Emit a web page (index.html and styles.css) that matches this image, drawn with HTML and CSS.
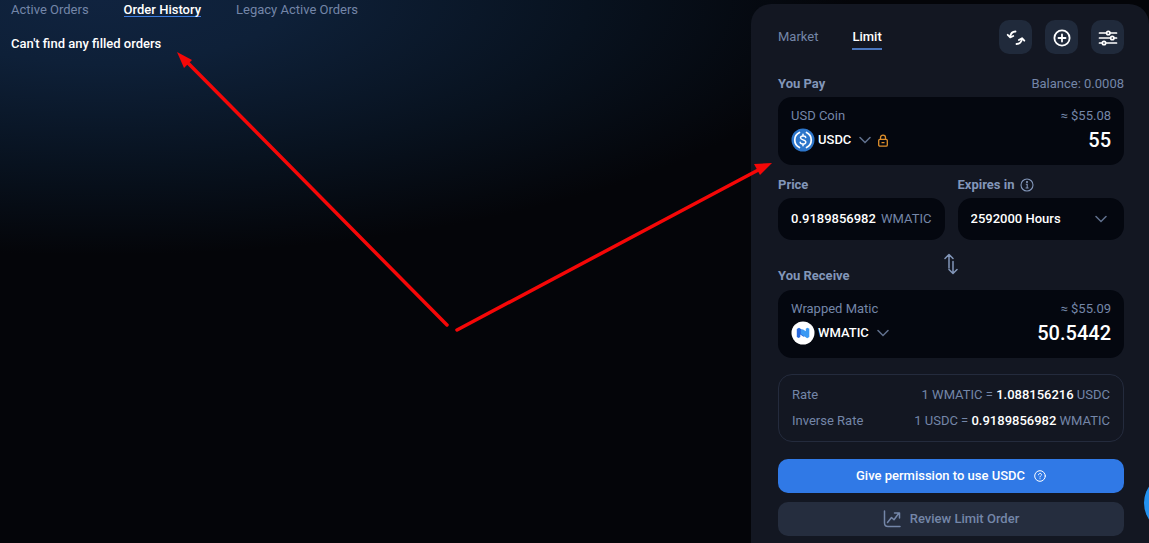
FILE: index.html
```html
<!DOCTYPE html>
<html lang="en">
<head>
    <meta charset="UTF-8">
    <meta name="viewport" content="width=device-width, initial-scale=1.0">
    <title>Limit Order</title>
    <link rel="stylesheet" href="styles.css">
</head>
<body>
    <div class="page">
        <main class="orders">
            <nav class="order-tabs">
                <a href="#active">Active Orders</a>
                <a href="#history" class="active">Order History</a>
                <a href="#legacy">Legacy Active Orders</a>
            </nav>
            <p class="empty">Can't find any filled orders</p>
        </main>

        <form class="panel">
            <div class="panel-header">
                <nav class="mode-tabs">
                    <a href="#market">Market</a>
                    <a href="#limit" class="active">Limit</a>
                </nav>
                <div class="tools">
                    <button type="button" class="tool" aria-label="Refresh">
                        <svg width="20" height="20" viewBox="0 0 20 20" fill="none" stroke="currentColor" stroke-width="1.8" stroke-linecap="round" stroke-linejoin="round">
                            <path d="M9.500 4.500C6.500 4.500 4.600 6.300 4.200 9.800M1.700 7.800L4.200 10.300L7.300 9M10.500 17C13.500 17 15.600 15.200 16 11.700M12.900 13L16 11.200L18.300 13.700"/>
                        </svg>
                    </button>
                    <button type="button" class="tool" aria-label="Add token">
                        <svg width="20" height="20" viewBox="0 0 20 20" fill="none" stroke="currentColor" stroke-width="1.8" stroke-linecap="round">
                            <circle cx="10" cy="11" r="7.600"/>
                            <path d="M10 7.500V14.500M6.500 11H13.500"/>
                        </svg>
                    </button>
                    <button type="button" class="tool" aria-label="Settings">
                        <svg width="20" height="20" viewBox="0 0 20 20" fill="none" stroke="currentColor" stroke-width="1.7" stroke-linecap="round">
                            <path d="M1.500 6H8.300M12.300 6H18.500M1.500 11H12.300M16.300 11H18.500M1.500 16H4M8 16H18.500"/>
                            <circle cx="10.300" cy="6" r="1.700"/>
                            <circle cx="14.300" cy="11" r="1.700"/>
                            <circle cx="6" cy="16" r="1.700"/>
                        </svg>
                    </button>
                </div>
            </div>

            <div class="label-row">
                <label class="label" for="pay">You Pay</label>
                <span>Balance: 0.0008</span>
            </div>
            <div class="token-box">
                <div class="token-row">
                    <span>USD Coin</span>
                    <span>≈ $55.08</span>
                </div>
                <div class="token-row">
                    <button type="button" class="token">
                        <svg width="24" height="24" viewBox="0 0 24 24" fill="none" stroke="#fff" stroke-linecap="round">
                            <circle cx="12" cy="12" r="11.500" fill="#2d76cb" stroke="none"/>
                            <path d="M8.500 4.500A8.300 8.300 0 0 0 8.500 19.500M15.500 4.500A8.300 8.300 0 0 1 15.500 19.500" stroke-width="1.700"/>
                            <path d="M14.700 9.500C14.500 7.500 9.500 7.400 9.500 9.800C9.500 12.400 14.800 11.300 14.800 14.100C14.800 16.700 9.300 16.500 9.200 14.200M12 6.300V8M12 16V17.700" stroke-width="1.500"/>
                        </svg>
                        USDC
                        <svg class="chevron" width="12" height="8" viewBox="0 0 12 8"><path d="M1 1.500L6 6.500L11 1.500"/></svg>
                    </button>
                    <svg class="lock" width="10" height="13" viewBox="0 0 10 13" fill="none" stroke="currentColor" stroke-width="1.300">
                        <rect x="0.700" y="5.300" width="8.600" height="6.800" rx="1.200"/>
                        <path d="M2.500 5.300V3.500C2.500 0.200 7.500 0.200 7.500 3.500V5.300M3.500 8.700H6.500"/>
                    </svg>
                    <input id="pay" class="amount" type="text" value="55">
                </div>
            </div>

            <div class="fields">
                <div class="field">
                    <label class="label" for="price">Price</label>
                    <div class="field-box">
                        <input id="price" type="text" value="0.9189856982">
                        <span>WMATIC</span>
                    </div>
                </div>
                <div class="field">
                    <label class="label" for="expires">Expires in
                        <svg width="14" height="14" viewBox="0 0 14 14" fill="none" stroke="currentColor" stroke-width="1.100">
                            <circle cx="7" cy="7" r="6"/>
                            <path d="M5.800 6.200H7.200V10M5.600 10H8.600"/>
                            <circle cx="7" cy="4" r="0.500" fill="currentColor"/>
                        </svg>
                    </label>
                    <div class="field-box select-box">
                        <select id="expires">
                            <option>2592000 Hours</option>
                        </select>
                        <svg class="chevron" width="12" height="8" viewBox="0 0 12 8"><path d="M1 1.500L6 6.500L11 1.500"/></svg>
                    </div>
                </div>
            </div>

            <div class="switch-row">
                <label class="label" for="receive">You Receive</label>
                <button type="button" class="switch" aria-label="Switch tokens">
                    <svg width="14" height="22" viewBox="0 0 14 22" fill="none" stroke="currentColor" stroke-width="1.500" stroke-linecap="round" stroke-linejoin="round">
                        <path d="M5 15V2M1 5.500L5 1.500L9 5.500M9 8.500V20M5 16.500L9 20.500L13 16.500"/>
                    </svg>
                </button>
            </div>
            <div class="token-box">
                <div class="token-row">
                    <span>Wrapped Matic</span>
                    <span>≈ $55.09</span>
                </div>
                <div class="token-row">
                    <button type="button" class="token">
                        <svg width="24" height="24" viewBox="0 0 24 24">
                            <circle cx="12" cy="12" r="11.500" fill="#fff"/>
                            <path d="M5.800 8L8 6.700L14.500 11V14.500L12.500 15.700L9.300 13.500V16L7.600 17L5.800 16Z" fill="#2868dc"/>
                            <path d="M18.300 16L16.200 17.200L9.800 13V9.300L11.800 8.200L14.800 10.300V7.800L16.500 6.800L18.300 7.800Z" fill="#3a99f3"/>
                        </svg>
                        WMATIC
                        <svg class="chevron" width="12" height="8" viewBox="0 0 12 8"><path d="M1 1.500L6 6.500L11 1.500"/></svg>
                    </button>
                    <input id="receive" class="amount" type="text" value="50.5442">
                </div>
            </div>

            <dl class="rates">
                <div class="rate">
                    <dt>Rate</dt>
                    <dd>1 WMATIC = <b>1.088156216</b> USDC</dd>
                </div>
                <div class="rate">
                    <dt>Inverse Rate</dt>
                    <dd>1 USDC = <b>0.9189856982</b> WMATIC</dd>
                </div>
            </dl>

            <button type="button" class="button primary">
                Give permission to use USDC
                <svg width="12" height="12" viewBox="0 0 12 12" fill="none" stroke="currentColor" stroke-linecap="round">
                    <circle cx="6" cy="6" r="5.300"/>
                    <path d="M4.500 4.800C4.500 2.800 7.500 2.900 7.500 4.700C7.500 5.800 6 5.800 6 7M6 8.700V8.800"/>
                </svg>
            </button>
            <button type="button" class="button review" disabled>
                <svg width="18" height="18" viewBox="0 0 18 18" fill="none" stroke="currentColor" stroke-width="1.500" stroke-linecap="round" stroke-linejoin="round">
                    <path d="M1.500 1V13C1.500 15.500 2.500 16.500 5 16.500H17M4.500 12.500L8.500 7.500L11 9.800L16 3M11.500 3H16.500V8"/>
                </svg>
                Review Limit Order
            </button>
        </form>
    </div>

    <svg class="arrows" width="780" height="340" viewBox="0 0 780 340" aria-hidden="true">
        <g stroke="#f50707" stroke-width="3.5" stroke-linecap="round">
            <path d="M447 325L186 61"/>
            <path d="M457 330L762 168"/>
        </g>
        <g fill="#f50707">
            <path d="M177 52L192 60L184 68Z"/>
            <path d="M772 163L760 175L754 164Z"/>
        </g>
    </svg>
    <button type="button" class="chat" aria-label="Open chat"></button>
</body>
</html>
```
FILE: styles.css
```css
* {
    box-sizing: border-box;
}

body {
    margin: 0;
    min-height: 100vh;
    overflow: hidden;
    background: #040509 radial-gradient(ellipse 750px 255px at 100px 0, #10233f 0%, #0e2038 25%, #08121f 65%, #040509 100%) no-repeat;
    color: #7486a8;
    font-family: Roboto, sans-serif;
    font-size: 13px;
    line-height: 16px;
}

button,
input,
select {
    margin: 0;
    padding: 0;
    border: none;
    background: none;
    color: #fff;
    font: inherit;
}

button {
    cursor: pointer;
}

a {
    color: inherit;
    text-decoration: none;
}

svg {
    flex-shrink: 0;
}

.page {
    display: grid;
    grid-template-columns: 1fr 398px;
    min-height: 100vh;
}

.orders {
    padding: 4px 11px;
}

.order-tabs {
    display: flex;
    gap: 35px;
    line-height: 12px;
}

.order-tabs .active {
    color: #fff;
    font-weight: 500;
    border-bottom: 1px solid #3d7de0;
}

.empty {
    margin: 19px 0;
    color: #fff;
    font-weight: 500;
}

.panel {
    margin-top: 4px;
    padding: 16px 25px 7px 27px;
    border-radius: 20px 20px 0 0;
    background: #131722;
}

.panel-header,
.label-row,
.token-row,
.rate {
    display: flex;
    align-items: center;
    justify-content: space-between;
}

.mode-tabs {
    display: flex;
    gap: 34px;
}

.mode-tabs a {
    padding: 5px 0 3px;
    border-bottom: 2px solid transparent;
}

.mode-tabs .active {
    color: #fff;
    font-weight: 500;
    border-color: #4a76bd;
}

.tools {
    display: flex;
    gap: 13px;
}

.tool {
    display: flex;
    align-items: center;
    justify-content: center;
    width: 33px;
    height: 34px;
    border-radius: 10px;
    background: #202a3b;
}

.label-row {
    margin: 22px 0 5px;
}

.label {
    display: flex;
    align-items: center;
    gap: 6px;
    color: #8296b9;
    font-weight: 700;
}

.token-box {
    padding: 11px 13px 13px;
    border-radius: 14px;
    background: #04070f;
}

.token-row + .token-row {
    margin-top: 4px;
}

.token {
    display: flex;
    align-items: center;
    gap: 3px;
    font-weight: 500;
}

.chevron {
    margin-left: 5px;
    fill: none;
    stroke: #61718f;
    stroke-width: 1.5;
    stroke-linecap: round;
}

.lock {
    margin-left: 7px;
    color: #e0902c;
}

.amount {
    flex: 1;
    min-width: 0;
    height: 24px;
    font-size: 20px;
    font-weight: 500;
    text-align: right;
}

.fields {
    display: flex;
    gap: 13px;
    margin-top: 12px;
}

.field {
    flex: 1;
    min-width: 0;
}

.field-box {
    display: flex;
    align-items: center;
    height: 42px;
    margin-top: 5px;
    padding: 0 13px;
    border-radius: 14px;
    background: #04070f;
}

.field-box input {
    flex: 1;
    min-width: 0;
    font-weight: 500;
}

.select-box {
    padding-right: 17px;
}

.select-box select {
    flex: 1;
    appearance: none;
    font-weight: 500;
}

.switch-row {
    display: grid;
    grid-template-columns: 1fr auto 1fr;
    align-items: end;
    margin: 13px 0 6px;
}

.switch {
    height: 31px;
    display: flex;
    color: #8296b9;
}

.rates {
    display: grid;
    gap: 10px;
    margin: 16px 0 17px;
    padding: 12px 13px;
    border: 1px solid #242b3d;
    border-radius: 14px;
}

.rates dd {
    margin: 0;
}

.rates b {
    color: #fff;
    font-weight: 500;
}

.button {
    display: flex;
    align-items: center;
    justify-content: center;
    gap: 9px;
    width: 100%;
    height: 34px;
    border-radius: 10px;
    font-weight: 500;
}

.primary {
    background: #3079e6;
}

.review {
    margin-top: 9px;
    background: #252d3e;
    color: #7486a8;
    cursor: default;
}

.arrows {
    position: absolute;
    top: 0;
    left: 0;
    pointer-events: none;
}

.chat {
    position: fixed;
    right: -55px;
    bottom: 10px;
    width: 60px;
    height: 60px;
    border-radius: 50%;
    background: #2492f0;
}
```
